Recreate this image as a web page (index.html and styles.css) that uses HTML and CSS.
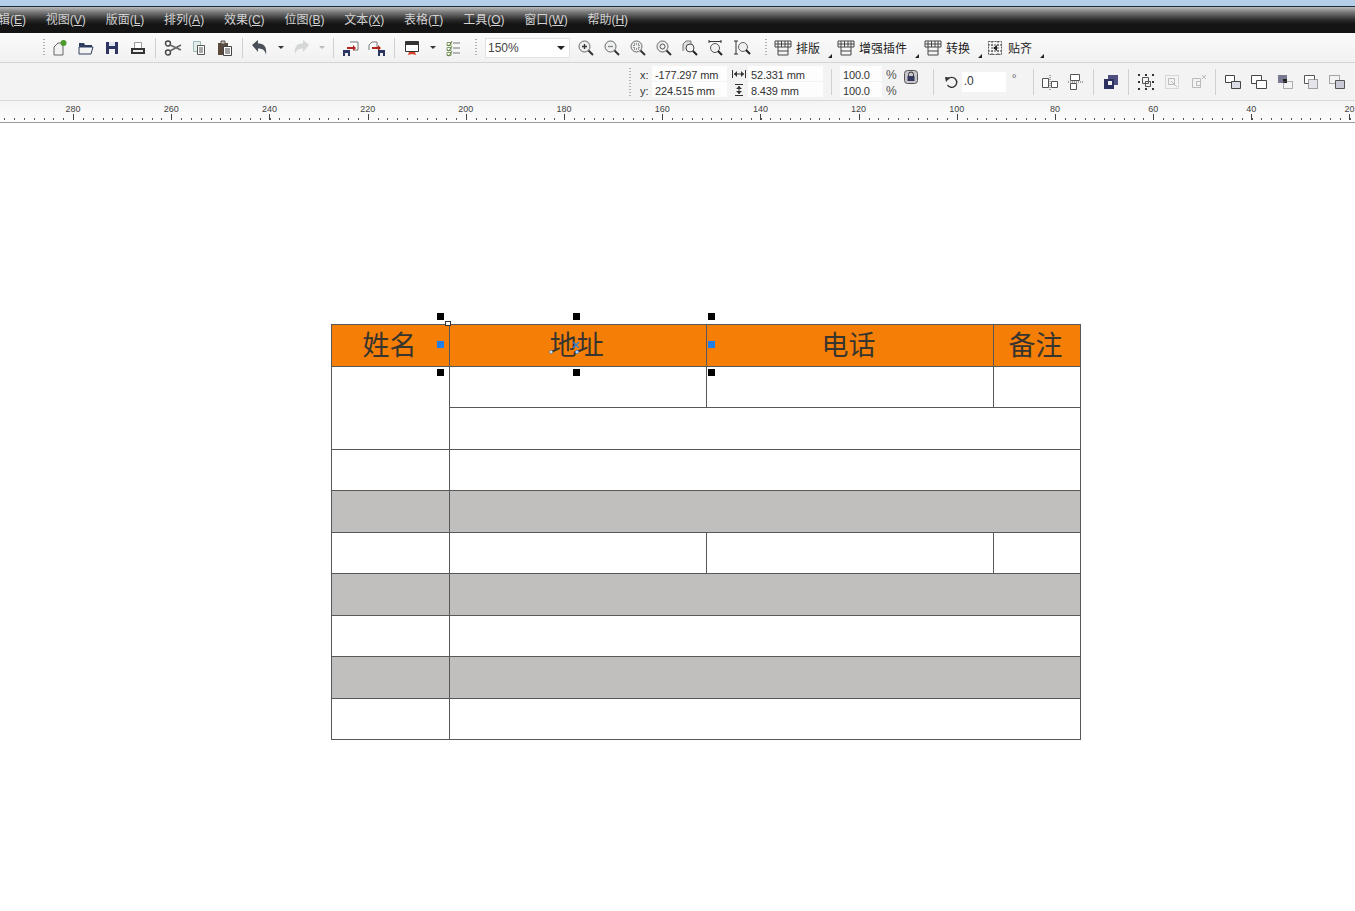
FILE: index.html
```html
<!DOCTYPE html>
<html lang="zh-CN">
<head>
    <meta charset="UTF-8">
    <title>表格排版</title>
    <link rel="stylesheet" href="styles.css">
</head>
<body>
    <svg class="defs" width="0" height="0">
        <symbol id="mag" viewBox="0 0 18 18">
            <circle cx="7.5" cy="7.5" r="5.5" fill="#eef0f0" stroke="#666"/>
            <path d="M11.5 11.5l4.5 4.5" stroke="#333" stroke-width="2"/>
        </symbol>
        <symbol id="plugin" viewBox="0 0 18 16">
            <path d="M1 1h16v6H1zM4 1v6M7.5 1v6M11 1v6M14 1v6M1 4h16M4 7v8h10V7M4 11h10" fill="none" stroke="#444"/>
        </symbol>
        <symbol id="shape" viewBox="0 0 18 18">
            <path d="M1.5 2.5h9v7h-9z" fill="#fff" stroke="#444"/>
            <path d="M7.5 8.5h9v7h-9z" fill="#dcdce6" stroke="#444"/>
        </symbol>
    </svg>

    <div class="titlestrip">
        <span class="cutoff">文件名称 - 图形设计软件</span>
    </div>

    <div class="menubar">
        <span class="menu first">编辑(<u>E</u>)</span>
        <span class="menu">视图(<u>V</u>)</span>
        <span class="menu">版面(<u>L</u>)</span>
        <span class="menu">排列(<u>A</u>)</span>
        <span class="menu">效果(<u>C</u>)</span>
        <span class="menu">位图(<u>B</u>)</span>
        <span class="menu">文本(<u>X</u>)</span>
        <span class="menu">表格(<u>T</u>)</span>
        <span class="menu">工具(<u>O</u>)</span>
        <span class="menu">窗口(<u>W</u>)</span>
        <span class="menu">帮助(<u>H</u>)</span>
    </div>

    <div class="toolbar">
        <i class="grip"></i>
        <span class="btn"><svg width="18" height="18" viewBox="0 0 18 18"><path d="M3 8l4-4h5v12H3z" fill="#f2f2f2" stroke="#666"/><circle cx="12.5" cy="4" r="3" fill="#4f9a2d"/></svg></span>
        <span class="btn"><svg width="18" height="18" viewBox="0 0 18 18"><path d="M2 4h5l1 2h7v3H2z" fill="#2f3e62"/><path d="M2 15V8h14l-2 7z" fill="#f4f4f4" stroke="#2f3e62"/></svg></span>
        <span class="btn"><svg width="18" height="18" viewBox="0 0 18 18"><path d="M3 3h12v12H3z" fill="#2b3560"/><path d="M6 3h6v4H6z" fill="#dfe3ee"/><path d="M6 10h6v5H6z" fill="#f4f4f4"/></svg></span>
        <span class="btn"><svg width="18" height="18" viewBox="0 0 18 18"><path d="M5.500 3.500h7v6h-7z" fill="#fff" stroke="#999"/><path d="M2 9h14v6H2z" fill="#333"/><path d="M4 11h10v2H4z" fill="#eee"/></svg></span>
        <i class="sep"></i>
        <span class="btn"><svg width="18" height="18" viewBox="0 0 18 18"><circle cx="4" cy="4.500" r="2.500" fill="none" stroke="#444" stroke-width="1.400"/><circle cx="4" cy="13.500" r="2.500" fill="none" stroke="#444" stroke-width="1.400"/><path d="M6 6l11 5M6 12l11-6" stroke="#666" stroke-width="1.500"/></svg></span>
        <span class="btn"><svg width="18" height="18" viewBox="0 0 18 18"><path d="M3.500 2.500h7v10h-7z" fill="#e4eee8" stroke="#9bb"/><path d="M7.500 6.500h7v9h-7z" fill="#fff" stroke="#555"/><path d="M9 9h4M9 11h4M9 13h4" stroke="#555"/></svg></span>
        <span class="btn"><svg width="18" height="18" viewBox="0 0 18 18"><path d="M2 4h10v12H2z" fill="#5b4a3a"/><path d="M5 2h4v3H5z" fill="#c9c2b6" stroke="#555"/><path d="M7.500 7.500h8v9h-8z" fill="#fff" stroke="#444"/><path d="M9 10h5M9 12h5M9 14h5" stroke="#444"/></svg></span>
        <i class="sep"></i>
        <span class="btn"><svg width="18" height="18" viewBox="0 0 18 18"><path d="M1 6l6-5v3.500c6 0 9 3 8 11-1-4-3-6-8-6V13z" fill="#4a5058"/></svg></span>
        <span class="drop"></span>
        <span class="btn"><svg width="18" height="18" viewBox="0 0 18 18"><path d="M17 6l-6-5v3.500c-6 0-9 3-8 11 1-4 3-6 8-6V13z" fill="#d4d6d8"/></svg></span>
        <span class="drop off"></span>
        <i class="sep"></i>
        <span class="btn"><svg width="18" height="18" viewBox="0 0 18 18"><path d="M8 3h8v8h-4" fill="#fff" stroke="#777"/><path d="M5 8h6V6l3 3-3 3v-2H5z" fill="#b3261e"/><path d="M1 11h7v6H1z" fill="#2b3560"/><path d="M3 14h3v3H3z" fill="#eee"/></svg></span>
        <span class="btn"><svg width="18" height="18" viewBox="0 0 18 18"><path d="M1 11V6l3-3h5v5" fill="#fff" stroke="#777"/><path d="M4 8h6V6l3 3-3 3v-2H4z" fill="#b3261e"/><path d="M10 11h7v6h-7z" fill="#2b3560"/><path d="M12 14h3v3h-3z" fill="#eee"/></svg></span>
        <i class="sep"></i>
        <span class="btn"><svg width="18" height="18" viewBox="0 0 18 18"><path d="M2.500 2.500h13v10h-13z" fill="#fff" stroke="#333"/><path d="M3 3h12v3H3z" fill="#333"/><path d="M6 13h6l1 3-4-1-4 1z" fill="#d8402a"/></svg></span>
        <span class="drop"></span>
        <span class="btn"><svg width="18" height="18" viewBox="0 0 18 18" fill="none"><path d="M3 3.500h4v3H3zM3 8.500h4v3H3zM3 13.500h4v3H3z" stroke="#8a9a70"/><path d="M3 6l2 1 3-5M3 11l2 1 3-5M3 16l2 1 3-5" stroke="#5d8a3a"/><path d="M9 4h7M9 9h7M9 14h7" stroke="#777"/></svg></span>
        <i class="grip wide"></i>
        <div class="combo"><span>150%</span><b class="caret"></b></div>
        <span class="btn"><svg width="18" height="18"><use href="#mag"/><path d="M5 7.500h5M7.500 5v5" stroke="#333" stroke-width="1.300"/></svg></span>
        <span class="btn"><svg width="18" height="18"><use href="#mag"/><path d="M5 7.500h5" stroke="#888" stroke-width="1.300"/></svg></span>
        <span class="btn"><svg width="18" height="18"><use href="#mag"/><path d="M5 5h5v5H5z" fill="none" stroke="#444" stroke-dasharray="1 1"/></svg></span>
        <span class="btn"><svg width="18" height="18"><use href="#mag"/><circle cx="7.500" cy="7.500" r="2.500" fill="none" stroke="#555"/></svg></span>
        <span class="btn"><svg width="18" height="18" viewBox="0 0 18 18"><path d="M2 12V5l3-3h5v6" fill="#ddd" stroke="#777"/><circle cx="9" cy="9" r="4" fill="#f4f4f4" stroke="#444"/><path d="M12 12l4 4" stroke="#222" stroke-width="2"/></svg></span>
        <span class="btn"><svg width="18" height="18" viewBox="0 0 18 18"><path d="M2 2.500h12M2 1v3M14 1v3" stroke="#333"/><circle cx="8" cy="9" r="4.500" fill="#f0f0f0" stroke="#555"/><path d="M11 12l4 4" stroke="#222" stroke-width="2"/></svg></span>
        <span class="btn"><svg width="18" height="18" viewBox="0 0 18 18"><path d="M3 2v13M1 2h4M1 15h4" stroke="#333"/><circle cx="10" cy="8" r="4.500" fill="#f0f0f0" stroke="#666"/><path d="M13 11l4 4" stroke="#222" stroke-width="2"/></svg></span>
        <i class="grip plugins"></i>
        <div class="plugin"><svg width="18" height="16"><use href="#plugin"/></svg><span>排版</span><i class="corner"></i></div>
        <div class="plugin"><svg width="18" height="16"><use href="#plugin"/></svg><span>增强插件</span><i class="corner"></i></div>
        <div class="plugin tight"><svg width="18" height="16"><use href="#plugin"/></svg><span>转换</span><i class="corner"></i></div>
        <div class="plugin"><svg width="18" height="16" viewBox="0 0 18 16" fill="none"><path d="M2.500 1.500h13v13h-13zM6 1v14M12 1v14M2 5h14M2 11h14" stroke="#555" stroke-dasharray="2 1"/><path d="M11 5v6L7 8z" fill="#222"/></svg><span>贴齐</span><i class="corner"></i></div>
    </div>

    <div class="propbar">
        <i class="grip"></i>
        <div class="coords">
            <div class="coordrow"><label>x:</label><span class="field first">-177.297 mm</span></div>
            <div class="coordrow"><label>y:</label><span class="field first">224.515 mm</span></div>
        </div>
        <div class="sizes">
            <div class="coordrow">
                <svg width="14" height="10" viewBox="0 0 14 10" fill="none" stroke="#333"><path d="M.5 1v8M13.500 1v8M2 5h10"/><path d="M2 5l3-3v6zM12 5L9 2v6z" fill="#333" stroke="none"/></svg>
                <span class="field second">52.331 mm</span>
            </div>
            <div class="coordrow">
                <svg width="14" height="12" viewBox="0 0 14 12" fill="none" stroke="#333"><path d="M3 .5h8M3 11.500h8M7 2v8"/><path d="M7 2L4 5h6zM7 10L4 7h6z" fill="#333" stroke="none"/></svg>
                <span class="field second">8.439 mm</span>
            </div>
        </div>
        <i class="sep tall sizegap"></i>
        <div class="scales">
            <div class="coordrow"><span class="field third">100.0</span><em>%</em></div>
            <div class="coordrow"><span class="field third">100.0</span><em>%</em></div>
        </div>
        <svg class="lock" width="14" height="14" viewBox="0 0 14 14"><rect x=".5" y=".5" width="13" height="13" rx="3" fill="#c8c8cc" stroke="#555"/><path d="M4.500 6V4.500a2.500 2.500 0 0 1 5 0V6" fill="none" stroke="#333"/><rect x="3.500" y="6" width="7" height="5" fill="#33385c"/></svg>
        <i class="sep tall lockgap"></i>
        <svg class="rotate" width="14" height="14" viewBox="0 0 14 14" fill="none"><path d="M3 4a5 5 0 1 1-.5 6" stroke="#333" stroke-width="1.400"/><path d="M0 2l5 .5L1 7z" fill="#333"/></svg>
        <span class="angle">.0</span>
        <span class="degree">°</span>
        <i class="sep tall tight"></i>
        <span class="btn"><svg width="18" height="18" viewBox="0 0 18 18" fill="#fff" stroke="#555"><path d="M1.500 5.500h6v9h-6zM10.500 8.500h6v6h-6z"/><path d="M9 2v15" stroke-dasharray="1 1"/></svg></span>
        <span class="btn"><svg width="18" height="18" viewBox="0 0 18 18" fill="#fff" stroke="#555"><path d="M3.500 1.500h9v6h-9zM3.500 10.500h6v6h-6z"/><path d="M1 9h16" stroke-dasharray="1 1"/></svg></span>
        <i class="sep tall"></i>
        <span class="btn"><svg width="18" height="18" viewBox="0 0 18 18"><path d="M6 2h10v10H6z" fill="#4c4f80"/><path d="M2 6h10v10H2z" fill="#2d3160"/><path d="M6 8h4v4H6z" fill="#f2f2f2"/></svg></span>
        <i class="sep tall"></i>
        <span class="btn"><svg width="18" height="18" viewBox="0 0 18 18" fill="none" stroke="#555"><path d="M5.500 4.500h6v6h-6zM8.500 8.500h5v5h-5z"/><path d="M1 1h2v2H1zM8 1h2v2H8zM15 1h2v2h-2zM1 8h2v2H1zM15 8h2v2h-2zM1 15h2v2H1zM8 15h2v2H8zM15 15h2v2h-2z" fill="#333" stroke="none"/></svg></span>
        <span class="btn"><svg width="18" height="18" viewBox="0 0 18 18" fill="none" stroke="#bbb"><path d="M2.500 2.500h13v13h-13z" stroke-dasharray="1 1"/><path d="M5.500 5.500h6v6h-6zM8 8l6 6"/></svg></span>
        <span class="btn"><svg width="18" height="18" viewBox="0 0 18 18" fill="none" stroke="#bbb"><path d="M3.500 5.500h8v9h-8zM7.500 8.500h4v4h-4z"/><path d="M13 2l4 4M17 2l-4 4"/></svg></span>
        <i class="sep tall"></i>
        <span class="btn"><svg width="18" height="18"><use href="#shape"/></svg></span>
        <span class="btn"><svg width="18" height="18" viewBox="0 0 18 18"><path d="M1.500 2.500h10v8h-10z" fill="#fff" stroke="#444"/><path d="M6.500 7.500h10v8h-10z" fill="#fff" stroke="#444"/></svg></span>
        <span class="btn"><svg width="18" height="18" viewBox="0 0 18 18"><path d="M2 2h9v8H2z" fill="#777a90"/><path d="M7 6h4v4H7z" fill="#222"/><path d="M7.500 8.500h9v7h-9z" fill="none" stroke="#666" stroke-dasharray="1 1"/></svg></span>
        <span class="btn"><svg width="18" height="18" viewBox="0 0 18 18"><path d="M2.500 2.500h10v8h-10z" fill="#fff" stroke="#555"/><path d="M6.500 6.500h9v9h-9z" fill="#e4e4ea" stroke="#555" stroke-dasharray="1 1"/></svg></span>
        <span class="btn"><svg width="18" height="18" viewBox="0 0 18 18"><path d="M1.500 2.500h10v8h-10z" fill="none" stroke="#555" stroke-dasharray="1 1"/><path d="M7.500 7.500h9v8h-9z" fill="#c9cad6" stroke="#555"/></svg></span>
        <span class="btn"><svg width="18" height="18" viewBox="0 0 18 18"><path d="M1 2h12v8H1z" fill="#555"/></svg></span>
    </div>

    <div class="ruler">
        <span>280</span><span>260</span><span>240</span><span>220</span><span>200</span><span>180</span><span>160</span><span>140</span><span>120</span><span>100</span><span>80</span><span>60</span><span>40</span><span>20</span>
    </div>

    <div class="canvas">
        <div class="sheet">
            <div class="cell head">姓名</div>
            <div class="cell head">地址</div>
            <div class="cell head">电话</div>
            <div class="cell head">备注</div>

            <div class="cell tworows"></div>
            <div class="cell"></div>
            <div class="cell"></div>
            <div class="cell"></div>
            <div class="cell wide"></div>

            <div class="cell"></div>
            <div class="cell wide"></div>

            <div class="cell grey"></div>
            <div class="cell wide grey"></div>

            <div class="cell"></div>
            <div class="cell"></div>
            <div class="cell"></div>
            <div class="cell"></div>

            <div class="cell grey"></div>
            <div class="cell wide grey"></div>

            <div class="cell"></div>
            <div class="cell wide"></div>

            <div class="cell grey"></div>
            <div class="cell wide grey"></div>

            <div class="cell"></div>
            <div class="cell wide"></div>

            <i class="handle h1"></i>
            <i class="handle h2"></i>
            <i class="handle h3"></i>
            <i class="handle h4"></i>
            <i class="handle h5"></i>
            <i class="handle h6"></i>
            <i class="handle blue b1"></i>
            <i class="handle blue b2"></i>
            <i class="anchor"></i>
            <svg class="pivot" width="32" height="16" viewBox="0 0 32 16" fill="none">
                <path d="M24 1l6 6M30 1l-6 6" stroke="#2f7fd6" stroke-width="1.500"/>
                <circle cx="2" cy="11" r="1.500" fill="#fff" stroke="#6a88a8"/>
                <circle cx="28" cy="11" r="1.500" fill="#fff" stroke="#2f7fd6"/>
            </svg>
        </div>
    </div>
</body>
</html>
```

FILE: styles.css
```css
* {
    margin: 0;
    padding: 0;
    box-sizing: border-box;
}
html, body {
    width: 1355px;
    height: 911px;
    overflow: hidden;
}
body {
    background: #ffffff;
    color: #333333;
    font-family: "Liberation Sans", "Noto Sans CJK SC", sans-serif;
    font-size: 11px;
}
.defs {
    display: block;
    height: 0;
}
i, em {
    font-style: normal;
}

/* top of the window, almost all cut off */
.titlestrip {
    height: 7px;
    overflow: hidden;
    background: #b5cfeb;
    border-bottom: 1px solid #1c2a38;
    padding-left: 6px;
}
.cutoff {
    display: block;
    margin-top: -12px;
    font-size: 12px;
    line-height: 14px;
    color: #333333;
}

.menubar {
    height: 26px;
    display: flex;
    align-items: flex-end;
    gap: 19.8px;
    padding-bottom: 6px;
    background: linear-gradient(#bcbcbc 0, #7a7a7a 5px, #2a2a2a 13px, #141414 17px);
    color: #d2d2d2;
    font-size: 12px;
    line-height: 14px;
    white-space: nowrap;
}
.menu.first {
    margin-left: -14px;
}

.toolbar {
    height: 30px;
    display: flex;
    align-items: center;
    padding-left: 43px;
    background: linear-gradient(#fbfbfb, #f1f1f1);
    border-bottom: 1px solid #d4d4d4;
}
.btn {
    width: 26px;
    height: 20px;
    flex: none;
    display: flex;
    align-items: center;
    justify-content: center;
}
.grip {
    width: 2px;
    height: 18px;
    flex: none;
    margin-right: 2px;
    background: repeating-linear-gradient(#b0b0b0 0 1px, transparent 1px 3px);
}
.grip.wide {
    margin-left: 9px;
    margin-right: 8px;
}
.grip.plugins {
    margin-left: 10px;
    margin-right: 7px;
}
.sep {
    width: 1px;
    height: 20px;
    flex: none;
    margin: 0 4px;
    background: #d0d0d0;
}
.drop {
    width: 15px;
    height: 20px;
    flex: none;
    position: relative;
}
.drop::after {
    content: "";
    position: absolute;
    left: 5px;
    top: 8px;
    border: 3px solid transparent;
    border-top: 3px solid #333333;
    border-bottom: 0;
}
.drop.off::after {
    border-top-color: #bbbbbb;
}
.combo {
    width: 85px;
    height: 20px;
    flex: none;
    display: flex;
    align-items: center;
    justify-content: space-between;
    padding: 0 4px 0 2px;
    margin-right: 3px;
    background: #ffffff;
    border: 1px solid #e2e2e2;
    color: #444444;
    font-size: 12px;
}
.caret {
    margin-right: 0;
    border: 4px solid transparent;
    border-top: 4px solid #222222;
    border-bottom: 0;
}
.plugin {
    flex: none;
    position: relative;
    display: flex;
    align-items: center;
    gap: 4px;
    margin-right: 17px;
    font-size: 12px;
    color: #222222;
}
.plugin.tight {
    margin-right: 16px;
}
.corner {
    position: absolute;
    right: -12px;
    top: 15px;
    border-left: 4px solid transparent;
    border-bottom: 4px solid #222222;
}

.propbar {
    height: 38px;
    display: flex;
    align-items: center;
    padding-left: 629px;
    background: #f3f3f3;
    border-bottom: 1px solid #d8d8d8;
    white-space: nowrap;
}
.propbar > .grip {
    height: 28px;
    margin-right: 9px;
}
.propbar .sep.tall {
    height: 26px;
}
.propbar .sep.sizegap {
    margin-left: 8px;
}
.propbar .sep.tight {
    margin-right: 3px;
}
.coords, .sizes, .scales {
    flex: none;
    display: flex;
    flex-direction: column;
    gap: 1px;
}
.coordrow {
    height: 15px;
    display: flex;
    align-items: center;
    color: #333333;
}
.coordrow label {
    width: 12px;
    padding-top: 3px;
}
.field {
    height: 15px;
    display: block;
    overflow: hidden;
    line-height: 18px;
    padding-left: 3px;
    letter-spacing: -0.15px;
    background: #fdfdfd;
}
.field.first {
    width: 75px;
}
.sizes {
    margin-left: 5px;
}
.sizes svg {
    width: 14px;
    margin-right: 2px;
    flex: none;
}
.field.second {
    width: 75px;
}
.scales {
    margin-left: 4px;
}
.field.third {
    width: 42px;
}
.coordrow em {
    margin-left: 4px;
    padding-top: 3px;
    font-size: 12px;
    color: #555555;
}
.lock {
    flex: none;
    margin-left: 7px;
    margin-bottom: 10px;
}
.propbar .sep.lockgap {
    margin-left: 15px;
}
.rotate {
    flex: none;
    margin-left: 7px;
    margin-right: 3px;
}
.angle {
    width: 44px;
    height: 20px;
    flex: none;
    padding-left: 2px;
    line-height: 18px;
    font-size: 12px;
    background: #ffffff;
}
.degree {
    width: 23px;
    padding: 0 0 6px 6px;
    font-size: 12px;
    color: #666666;
    flex: none;
}

.ruler {
    height: 22px;
    display: flex;
    padding-left: 24px;
    overflow: hidden;
    border-bottom: 1px solid #9a9a9a;
    background-image:
        repeating-linear-gradient(90deg, #555555 0 1px, transparent 1px 9.82px),
        linear-gradient(#f4f4f4, #fdfdfd);
    background-size: 1400px 2px, 100% 100%;
    background-position: -5.46px 17px, 0 0;
    background-repeat: no-repeat;
}
.ruler span {
    width: 98.2px;
    flex: none;
    height: 19px;
    padding-top: 3px;
    text-align: center;
    font-size: 9px;
    line-height: 11px;
    color: #444444;
    background: linear-gradient(#444444, #444444) 49px 13px / 1px 6px no-repeat;
}

.canvas {
    height: 788px;
    padding: 201px 0 0 331px;
    background: #ffffff;
}
.sheet {
    width: 749.5px;
    position: relative;
    display: grid;
    grid-template-columns: 118px 256.5px 287px 87px;
    grid-auto-rows: 41.5px;
    border-top: 1px solid #585858;
    border-left: 1px solid #585858;
}
.cell {
    border-right: 1px solid #585858;
    border-bottom: 1px solid #585858;
    background: #ffffff;
}
.cell.head {
    display: flex;
    align-items: center;
    justify-content: center;
    padding: 0 2px 3px 0;
    background: #f57f06;
    color: #38342e;
    font-size: 27px;
}
.cell.tworows {
    grid-row: span 2;
}
.cell.wide {
    grid-column: span 3;
}
.cell.grey {
    background: #c0bfbd;
}

/* selection marks on top of the table */
.handle {
    position: absolute;
    width: 7px;
    height: 7px;
    background: #000000;
}
.handle.blue {
    background: #1f7fe8;
    top: 16px;
}
.h1, .h2, .h3 {
    top: -12px;
}
.h4, .h5, .h6 {
    top: 44px;
}
.h1, .h4, .b1 {
    left: 105px;
}
.h2, .h5 {
    left: 241px;
}
.h3, .h6, .b2 {
    left: 376px;
}
.anchor {
    position: absolute;
    left: 113px;
    top: -4px;
    width: 6px;
    height: 5px;
    background: #ffffff;
    border: 1px solid #333333;
}
.pivot {
    position: absolute;
    left: 217px;
    top: 16px;
}
```
